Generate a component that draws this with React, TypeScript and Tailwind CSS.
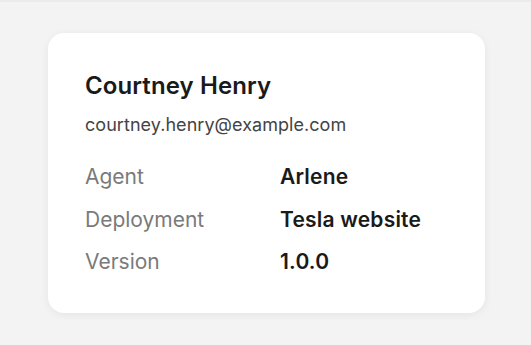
import React from "react";

export default function App() {
  const rows = [
    ["Agent", "Arlene"],
    ["Deployment", "Tesla website"],
    ["Version", "1.0.0"],
  ];
  return (
    <div
      className="w-[531px] h-[345px] bg-[#f3f3f3] border-t-2 border-[#ebebeb] pt-[31px] pl-[48px]"
      style={{ fontFamily: "Inter, 'Noto Sans', sans-serif" }}
    >
      <div className="w-[437px] h-[280px] bg-white rounded-[16px] shadow-[0_2px_8px_rgba(0,0,0,0.06)] pl-[37px] pt-[37px]">
        <div className="text-[24px] leading-[32px] font-semibold text-[#1a1a1a] tracking-[0.1px]">Courtney Henry</div>
        <div className="mt-[10px] text-[18px] leading-[26px] text-[#444444] tracking-[0.05px]">courtney.henry@example.com</div>
        <div className="mt-[25px] flex flex-col gap-[14.5px]">
          {rows.map(([k, v]) => (
            <div key={k} className="flex text-[21px] leading-[28px]">
              <div className="w-[195px] text-[#7a7a7a]">{k}</div>
              <div className="font-semibold text-[#1a1a1a] tracking-[0.2px]">{v}</div>
            </div>
          ))}
        </div>
      </div>
    </div>
  );
}
